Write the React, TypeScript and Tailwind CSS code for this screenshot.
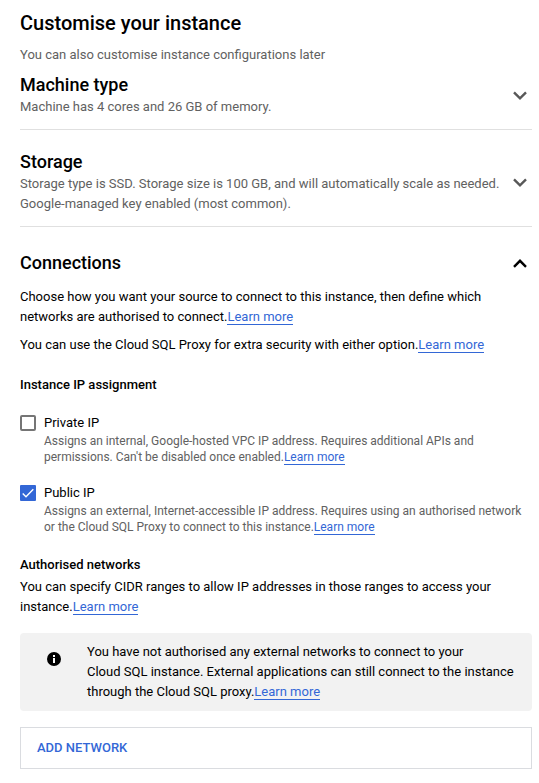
import React from 'react';

function Chevron({ up = false, color }: { up?: boolean; color: string }) {
  return (
    <svg width="24" height="24" viewBox="0 0 24 24" className="shrink-0" fill="none" stroke={color} strokeWidth="2.4">
      {up ? <path d="M6 15.8l6-6 6 6" /> : <path d="M6 8.3l6 6 6-6" />}
    </svg>
  );
}

function LearnMore() {
  return <a className="border-b border-[#3367d6] text-[#3367d6]">Learn more</a>;
}

function Checkbox({ checked = false }: { checked?: boolean }) {
  return (
    <span
      className={
        checked
          ? 'flex size-4 shrink-0 items-center justify-center rounded-[1px] bg-[#3367d6]'
          : 'block size-4 shrink-0 rounded-[2px] border-2 border-[#757575] bg-white'
      }
    >
      {checked && (
        <svg width="16" height="16" viewBox="0 0 16 16" fill="none" stroke="white" strokeWidth="1.4">
          <path d="M2.7 8.5l3.3 3.3 7.3-7.5" />
        </svg>
      )}
    </span>
  );
}

export default function App() {
  return (
    <main className="h-[783px] overflow-hidden bg-white pl-5 pr-[7px] pt-[10px] font-[Roboto,sans-serif] text-[13px] leading-5 text-black">
      <h1 className="text-[20px] font-medium leading-[26px]">Customise your instance</h1>
      <p className="mt-[9px] text-[#616161]">You can also customise instance configurations later</p>

      <section className="mt-[9px] flex h-[56px] border-b border-[#e0e0e0]">
        <div className="flex-1">
          <h2 className="text-[18px] font-medium leading-[22px]">Machine type</h2>
          <p className="mt-px text-[#616161]">Machine has 4 cores and 26 GB of memory.</p>
        </div>
        <div className="pt-[10px]"><Chevron color="#585858" /></div>
      </section>

      <section className="mt-[21px] flex h-[76px] border-b border-[#e0e0e0]">
        <div className="flex-1">
          <h2 className="text-[18px] font-medium leading-[22px]">Storage</h2>
          <p className="mt-px whitespace-nowrap text-[#616161]">Storage type is SSD. Storage size is 100 GB, and will automatically scale as needed.<br />Google-managed key enabled (most common).</p>
        </div>
        <div className="pt-[20px]"><Chevron color="#585858" /></div>
      </section>

      <div className="mt-6 flex h-6 items-center justify-between">
        <h2 className="text-[18px] font-medium leading-6">Connections</h2>
        <Chevron up color="#000" />
      </div>
      <p className="mt-3">Choose how you want your source to connect to this instance, then define which<br />networks are authorised to connect.<LearnMore /></p>
      <p className="mt-2">You can use the Cloud SQL Proxy for extra security with either option.<LearnMore /></p>
      <h3 className="mt-5 font-medium">Instance IP assignment</h3>

      <div className="mt-[18px] flex gap-2">
        <div className="pt-[2px]"><Checkbox /></div>
        <div>
          <p>Private IP</p>
          <p className="text-[12px] leading-4 text-[#616161]">Assigns an internal, Google-hosted VPC IP address. Requires additional APIs and<br />permissions. Can't be disabled once enabled.<LearnMore /></p>
        </div>
      </div>
      <div className="mt-[18px] flex gap-2">
        <div className="pt-[2px]"><Checkbox checked /></div>
        <div>
          <p>Public IP</p>
          <p className="text-[12px] leading-4 text-[#616161]">Assigns an external, Internet-accessible IP address. Requires using an authorised network<br />or the Cloud SQL Proxy to connect to this instance.<LearnMore /></p>
        </div>
      </div>

      <h3 className="mt-5 font-medium">Authorised networks</h3>
      <p className="mt-[2px]">You can specify CIDR ranges to allow IP addresses in those ranges to access your<br />instance.<LearnMore /></p>

      <div className="mt-4 flex h-[78px] rounded-sm bg-[#f2f2f2] pl-[26px] pt-[9px]">
        <svg width="16" height="16" viewBox="0 0 16 16" className="mt-[9px] shrink-0">
          <circle cx="8" cy="8" r="7" fill="black" />
          <path d="M7 7h2v5H7zM7 4h2v2H7z" fill="white" />
        </svg>
        <p className="ml-[25px] whitespace-nowrap">You have not authorised any external networks to connect to your<br />Cloud SQL instance. External applications can still connect to the instance<br />through the Cloud SQL proxy.<LearnMore /></p>
      </div>

      <button className="mt-4 flex h-[42px] w-full items-center border border-[#dadce0] px-4 font-medium text-[#3367d6]">ADD NETWORK</button>
    </main>
  );
}
